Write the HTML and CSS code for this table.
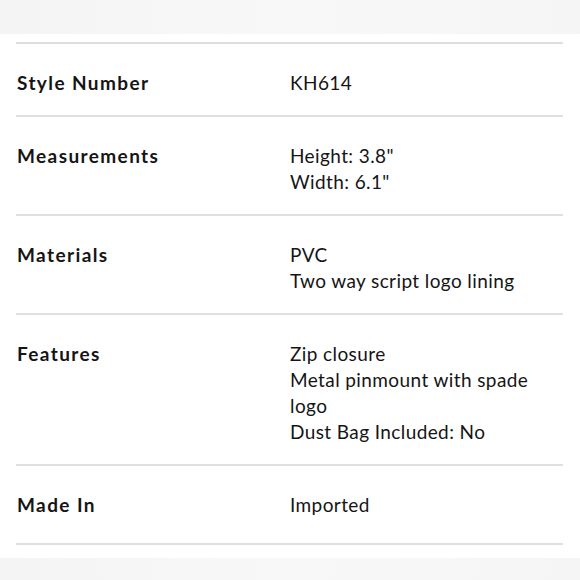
FILE: index.html
```html
<!DOCTYPE html>
<html>
<head>
<meta charset="utf-8">
<link rel="stylesheet" href="styles.css">
</head>
<body>
<div class="band band-top"></div>
<main class="specs">
  <div class="row">
    <div class="label">Style Number</div>
    <div class="value"><p>KH614</p></div>
  </div>
  <div class="row">
    <div class="label">Measurements</div>
    <div class="value"><p>Height: 3.8"</p><p>Width: 6.1"</p></div>
  </div>
  <div class="row">
    <div class="label">Materials</div>
    <div class="value"><p>PVC</p><p>Two way script logo lining</p></div>
  </div>
  <div class="row">
    <div class="label">Features</div>
    <div class="value"><p>Zip closure</p><p>Metal pinmount with spade logo</p><p>Dust Bag Included: No</p></div>
  </div>
  <div class="row row-last">
    <div class="label">Made In</div>
    <div class="value"><p>Imported</p></div>
  </div>
</main>
<div class="band band-bottom"></div>
</body>
</html>
```
FILE: styles.css
```css
html, body {
  margin: 0;
  padding: 0;
  background: #ffffff;
}
body {
  width: 580px;
  height: 580px;
  display: flex;
  flex-direction: column;
  overflow: hidden;
  font-family: "Lato", "Liberation Sans", sans-serif;
  color: #151515;
}
.band {
  background: linear-gradient(90deg, #f4f4f4 0%, #f8f8f8 50%, #f5f5f5 100%);
}
.band-top {
  height: 34px;
}
.band-bottom {
  flex: 1;
}
.specs {
  margin: 8px 17px 13px 16px;
  border-top: 2px solid #dedede;
}
.row {
  display: grid;
  grid-template-columns: 274px 1fr;
  padding: 26px 0 19px;
  border-bottom: 2px solid #e0e0e0;
}
.row-last {
  padding-bottom: 25px;
}
.label {
  padding-left: 1px;
  font-size: 19px;
  font-weight: 700;
  letter-spacing: 1.4px;
  line-height: 26px;
}
.value {
  font-size: 19px;
  letter-spacing: 0.4px;
  line-height: 26px;
  font-weight: 400;
}
.value p {
  margin: 0;
}
```
